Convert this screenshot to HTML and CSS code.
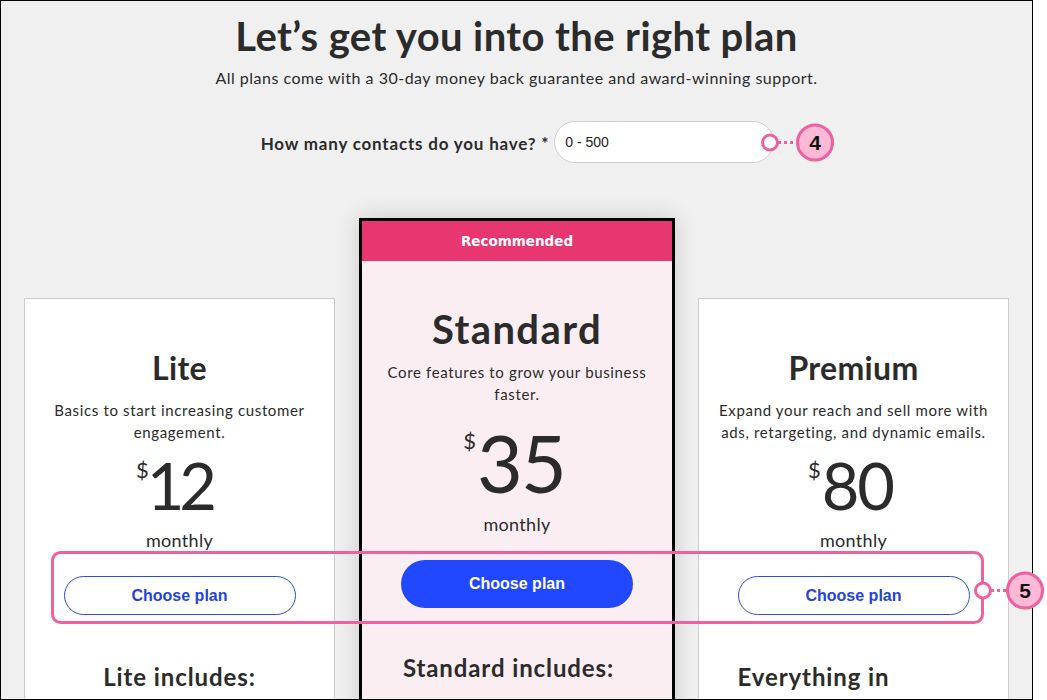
FILE: index.html
```html
<!DOCTYPE html>
<html lang="en">
<head>
<meta charset="utf-8">
<title>Plans</title>
<link rel="stylesheet" href="styles.css">
</head>
<body>
<div class="stage">
  <div class="frame">
    <header class="intro">
      <h1 class="title">Let’s get you into the right plan</h1>
      <p class="subtitle">All plans come with a 30-day money back guarantee and award-winning support.</p>
    </header>

    <div class="contacts">
      <label class="contacts-label">How many contacts do you have? *</label>
      <div class="contacts-input">0 - 500</div>
    </div>

    <div class="plans">
      <section class="card card-side">
        <h2 class="plan-name">Lite</h2>
        <p class="plan-desc">Basics to start increasing customer engagement.</p>
        <div class="price"><span class="cur">$</span><span class="amount amount-narrow">12</span></div>
        <div class="period">monthly</div>
        <button class="btn btn-outline">Choose plan</button>
        <h3 class="includes">Lite includes:</h3>
      </section>

      <section class="card card-rec">
        <div class="rec-head">Recommended</div>
        <div class="rec-body">
          <h2 class="plan-name">Standard</h2>
          <p class="plan-desc">Core features to grow your business faster.</p>
          <div class="price"><span class="cur">$</span><span class="amount">35</span></div>
          <div class="period">monthly</div>
          <button class="btn btn-fill">Choose plan</button>
          <h3 class="includes includes-std">Standard includes:</h3>
        </div>
      </section>

      <section class="card card-side">
        <h2 class="plan-name">Premium</h2>
        <p class="plan-desc">Expand your reach and sell more with ads, retargeting, and dynamic emails.</p>
        <div class="price"><span class="cur">$</span><span class="amount">80</span></div>
        <div class="period">monthly</div>
        <button class="btn btn-outline">Choose plan</button>
        <h3 class="includes includes-prem">Everything in</h3>
      </section>
    </div>
  </div>

  <svg class="marks" width="1047" height="700" viewBox="0 0 1047 700" xmlns="http://www.w3.org/2000/svg">
    <g fill="none" stroke="#f0609e" stroke-width="3">
      <line x1="778" y1="142.5" x2="797" y2="142.5" stroke-dasharray="3 3"/>
      <rect x="52.5" y="552.5" width="930" height="70" rx="8" ry="8"/>
      <line x1="991" y1="590.5" x2="1007" y2="590.5" stroke-dasharray="3 3"/>
    </g>
    <circle cx="770" cy="142.5" r="7.5" fill="#fff" stroke="#f0609e" stroke-width="3"/>
    <circle cx="815" cy="142.5" r="17.5" fill="#ffb8d5" stroke="#f0609e" stroke-width="3"/>
    <text x="815" y="150" class="mark-num" text-anchor="middle">4</text>
    <circle cx="983" cy="590.5" r="7.5" fill="#fff" stroke="#f0609e" stroke-width="3"/>
    <circle cx="1025" cy="590.5" r="17.5" fill="#ffb8d5" stroke="#f0609e" stroke-width="3"/>
    <text x="1025" y="598" class="mark-num" text-anchor="middle">5</text>
  </svg>
</div>
</body>
</html>
```

FILE: styles.css
```css
* { box-sizing: border-box; }

html, body {
  margin: 0;
  padding: 0;
  background: #ffffff;
}

body {
  font-family: Lato, "Liberation Sans", Arial, sans-serif;
  color: #2b2b2b;
}

.stage {
  position: relative;
  width: 1047px;
  height: 700px;
  overflow: hidden;
}

.frame {
  width: 1033px;
  height: 700px;
  border: 1px solid #000;
  background: #f0f0f0;
  overflow: hidden;
  padding-top: 11px;
  display: flex;
  flex-direction: column;
  align-items: center;
}

.intro {
  text-align: center;
}

.title {
  margin: 0;
  font-size: 40px;
  line-height: 48px;
  font-weight: 700;
  letter-spacing: 0.4px;
  color: #2b2b2b;
}

.subtitle {
  margin: 8px 0 0;
  font-size: 16px;
  line-height: 19px;
  letter-spacing: 0.5px;
  color: #2b2b2b;
}

.contacts {
  margin-top: 34px;
  display: flex;
  align-items: center;
  gap: 5px;
  padding-left: 2px;
}

.contacts-label {
  font-size: 17px;
  font-weight: 700;
  line-height: 20px;
  letter-spacing: 0.8px;
  padding-top: 4px;
}

.contacts-input {
  width: 220px;
  height: 42px;
  border: 1px solid #cfcfcf;
  border-radius: 21px;
  background: #fff;
  font-family: "Liberation Sans", Arial, sans-serif;
  font-size: 14px;
  color: #222;
  padding: 0 10px;
  display: flex;
  align-items: center;
}

.plans {
  margin-top: 55px;
  display: flex;
  align-items: flex-start;
}

.card {
  text-align: center;
}

.card-side {
  width: 311px;
  min-height: 440px;
  margin-top: 80px;
  background: #fff;
  border: 1px solid #cccccc;
  padding: 50px 14px 0;
}

.card-rec {
  width: 316px;
  min-height: 520px;
  margin: 0 23px 0 24px;
  border: 3px solid #000;
  background: #fbeef3;
  box-shadow: 0 0 22px rgba(0, 0, 0, 0.16);
}

.rec-head {
  height: 40px;
  background: #e83670;
  color: #fff;
  font-family: "DejaVu Sans", sans-serif;
  font-weight: 700;
  font-size: 13.5px;
  display: flex;
  align-items: center;
  justify-content: center;
  padding-bottom: 1px;
}

.rec-body {
  padding: 45px 14px 0;
}

.plan-name {
  margin: 0;
  font-size: 32px;
  line-height: 38px;
  font-weight: 700;
  letter-spacing: 0.3px;
}

.card-rec .plan-name {
  font-size: 40px;
  line-height: 47px;
  letter-spacing: 1.4px;
}

.plan-desc {
  margin: 12px 0 0;
  font-size: 15px;
  line-height: 22px;
  letter-spacing: 0.65px;
}

.card-rec .plan-desc {
  margin-top: 8px;
}

.price {
  margin-top: 10px;
  display: flex;
  justify-content: center;
  align-items: flex-start;
  padding-right: 6px;
}

.card-rec .price {
  margin-top: 18px;
}

.cur {
  font-size: 22px;
  line-height: 22px;
  margin-top: 6px;
  margin-right: 1px;
}

.card-rec .cur {
  margin-top: 7px;
}

.amount {
  font-size: 65px;
  line-height: 65px;
  font-weight: 400;
  letter-spacing: -2px;
}

.amount-narrow {
  letter-spacing: -5px;
  margin-left: -3px;
  padding-right: 5px;
}

.card-rec .amount {
  font-size: 79px;
  line-height: 79px;
}

.period {
  margin-top: 10px;
  font-size: 18px;
  line-height: 24px;
  letter-spacing: 0.3px;
}

.card-rec .period {
  margin-top: 10px;
}

.btn {
  display: block;
  margin: 24px auto 0;
  width: 232px;
  font-family: "Liberation Sans", Arial, sans-serif;
  font-weight: 700;
  font-size: 16px;
  cursor: pointer;
}

.btn-outline {
  height: 39px;
  border-radius: 20px;
  border: 1px solid #2b4ee0;
  background: #fff;
  color: #1f44e0;
}

.btn-fill {
  height: 48px;
  margin-top: 24px;
  border-radius: 24px;
  border: 0;
  background: #2148ff;
  color: #fff;
}

.includes {
  margin: 48px 0 0;
  font-size: 24px;
  line-height: 28px;
  font-weight: 700;
  letter-spacing: 0.9px;
}

.card-rec .includes {
  margin-top: 46px;
}

.includes-std {
  padding-right: 17px;
}

.includes-prem {
  padding-right: 80px;
}

.marks {
  position: absolute;
  left: 0;
  top: 0;
  pointer-events: none;
}

.mark-num {
  font-family: "Liberation Sans", Arial, sans-serif;
  font-weight: 700;
  font-size: 21px;
  fill: #111;
}
```
